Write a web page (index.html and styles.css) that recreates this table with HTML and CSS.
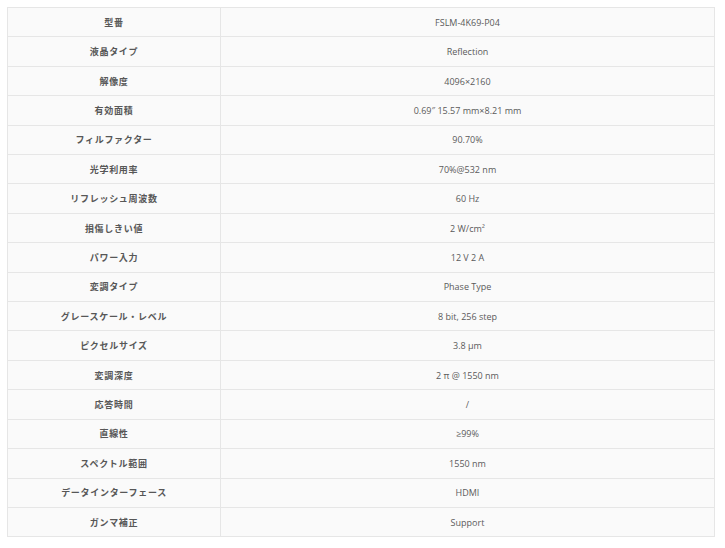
FILE: index.html
```html
<!DOCTYPE html>
<html lang="ja">
<head>
<meta charset="utf-8">
<link rel="stylesheet" href="styles.css">
</head>
<body>
<table class="spec">
<tbody>
<tr><th>型番</th><td>FSLM-4K69-P04</td></tr>
<tr><th>液晶タイプ</th><td>Reflection</td></tr>
<tr><th>解像度</th><td>4096×2160</td></tr>
<tr><th>有効面積</th><td>0.69″ 15.57 mm×8.21 mm</td></tr>
<tr><th>フィルファクター</th><td>90.70%</td></tr>
<tr><th>光学利用率</th><td>70%@532 nm</td></tr>
<tr><th>リフレッシュ周波数</th><td>60 Hz</td></tr>
<tr><th>損傷しきい値</th><td>2 W/cm²</td></tr>
<tr><th>パワー入力</th><td>12 V 2 A</td></tr>
<tr><th>変調タイプ</th><td>Phase Type</td></tr>
<tr><th>グレースケール・レベル</th><td>8 bit, 256 step</td></tr>
<tr><th>ピクセルサイズ</th><td>3.8 μm</td></tr>
<tr><th>変調深度</th><td>2 π @ 1550 nm</td></tr>
<tr><th>応答時間</th><td>/</td></tr>
<tr><th>直線性</th><td>≥99%</td></tr>
<tr><th>スペクトル範囲</th><td>1550 nm</td></tr>
<tr><th>データインターフェース</th><td>HDMI</td></tr>
<tr><th>ガンマ補正</th><td>Support</td></tr>
</tbody>
</table>
</body>
</html>
```
FILE: styles.css
```css
html, body {
  margin: 0;
  padding: 0;
  background: #ffffff;
}
body {
  padding: 7px 10px 0 7px;
  font-family: "Open Sans", "Noto Sans CJK JP", sans-serif;
}
.spec {
  width: 708px;
  border-collapse: collapse;
  background: #fafafa;
  border: 1px solid #e6e6e6;
}
.spec th, .spec td {
  height: 28.42px;
  padding: 0;
  border: 1px solid #e6e6e6;
  text-align: center;
  vertical-align: middle;
  font-size: 9px;
  color: #5a5a5a;
}
.spec th {
  width: 212px;
  font-family: "Noto Sans CJK JP", sans-serif;
  font-weight: bold;
  color: #575757;
  letter-spacing: 0.7px;
}
.spec td {
  font-weight: normal;
}
```
